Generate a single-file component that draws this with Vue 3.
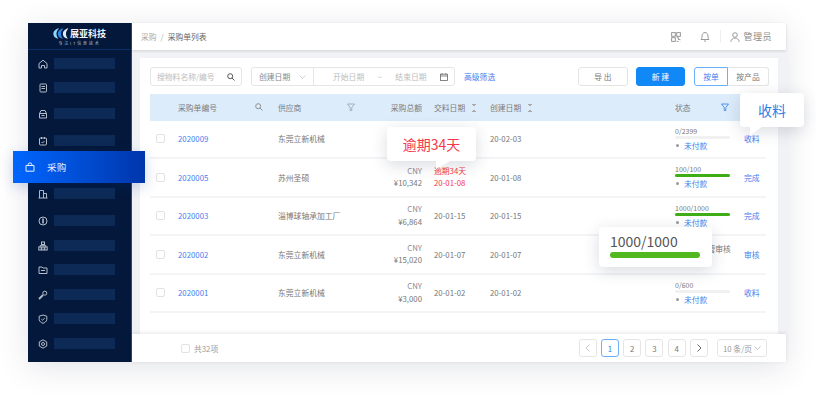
<script setup>
const menu = [
  { key: 'home', gap: 8 }, { key: 'order', gap: 13 }, { key: 'box', gap: 15 }, { key: 'check', gap: 16 },
  { key: 'buy', gap: 5, label: '采购', active: true },
  { key: 'build', gap: 5 }, { key: 'coin', gap: 16 }, { key: 'org', gap: 14 }, { key: 'folder', gap: 13 },
  { key: 'tool', gap: 14 }, { key: 'shield', gap: 13 }, { key: 'gear', gap: 14 },
]

// the first row's total and delivery date sit behind the overdue tooltip in the design
const rows = [
  { code: '2020009', vendor: '东莞立新机械', created: '20-02-03', done: '0/2399', pct: 0, pay: '未付款', action: '收料' },
  { code: '2020005', vendor: '苏州圣硕', total: '¥10,342', late: '逾期34天', date: '20-01-08', created: '20-01-08', done: '100/100', pct: 100, pay: '未付款', action: '完成' },
  { code: '2020003', vendor: '淄博球轴承加工厂', total: '¥6,864', date: '20-01-15', created: '20-01-15', done: '1000/1000', pct: 100, pay: '未付款', action: '完成' },
  { code: '2020002', vendor: '东莞立新机械', total: '¥15,020', date: '20-01-07', created: '20-01-07', wait: '等待主管审核', pay: '未付款', action: '审核' },
  { code: '2020001', vendor: '东莞立新机械', total: '¥3,000', date: '20-01-02', created: '20-01-02', done: '0/600', pct: 0, pay: '未付款', action: '收料' },
]
</script>

<template>
  <div class="page">
    <div class="window">
      <aside class="side">
        <div class="brand">
          <div class="brand-top">
            <svg width="16" height="11" viewBox="0 0 16 11">
              <path d="M6 0.300C2.500 0.800 0 3.500 0.400 6.500C0.700 9 3 10.500 5.500 10.700C3.800 9 3.200 6.500 3.600 4.500C4 3 5 1.500 6 0.300Z" fill="#8fd6f7" />
              <path d="M10.500 0.300C7 0.800 4.500 3.500 4.900 6.500C5.200 9 7.500 10.500 10 10.700C8.300 9 7.700 6.500 8.100 4.500C8.500 3 9.500 1.500 10.500 0.300Z" fill="#2b86e6" />
              <path d="M15.500 0.300C12 0.800 9.500 3.500 9.900 6.500C10.200 9 12.500 10.500 15 10.700C13.300 9 12.700 6.500 13.100 4.500C13.500 3 14.500 1.500 15.500 0.300Z" fill="#d8ecfc" />
            </svg>
            <span>展亚科技</span>
          </div>
          <div class="brand-sub">专注IT信息技术</div>
        </div>
        <nav class="menu">
          <div v-for="m in menu" :key="m.key" class="menu-item" :class="{ active: m.active }" :style="{ marginTop: m.gap + 'px' }">
            <svg class="menu-icon" viewBox="0 0 10 10" fill="none" stroke="currentColor" stroke-width="1">
              <template v-if="m.key === 'home'"><path d="M1 9V4.500L5 1.200L9 4.500V9H6.500V6.500H3.500V9Z" /></template>
              <template v-else-if="m.key === 'order'"><rect x="2" y="1" width="6.500" height="8" rx="0.800" /><path d="M3.500 3.500H7M3.500 5.500H7" /></template>
              <template v-else-if="m.key === 'box'"><path d="M1.500 4.500L3 1.500H7L8.500 4.500V9H1.500Z" /><path d="M1.500 4.500H8.500M3.500 6.500H6.500" /></template>
              <template v-else-if="m.key === 'check'"><rect x="1.500" y="2" width="7" height="7" rx="1" /><path d="M3.500 1V3M6.500 1V3M3.500 6L4.500 7L6.500 5" /></template>
              <template v-else-if="m.key === 'buy'"><path d="M1 3.500H9V9.200H1Z" /><path d="M3.200 3.500V2.200C3.200 0.500 6.800 0.500 6.800 2.200V3.500" /></template>
              <template v-else-if="m.key === 'build'"><path d="M1.500 9V1.500H5.500V9M5.500 4.500H8.500V9M0.500 9H9.500" /></template>
              <template v-else-if="m.key === 'coin'"><circle cx="5" cy="5" r="4" /><path d="M5 2.500V7.500" stroke-width="1.600" /></template>
              <template v-else-if="m.key === 'org'"><rect x="3.500" y="1" width="3" height="2.500" /><rect x="0.800" y="6" width="2.400" height="3" /><rect x="3.800" y="6" width="2.400" height="3" /><rect x="6.800" y="6" width="2.400" height="3" /><path d="M2 6V4.700H8V6" /></template>
              <template v-else-if="m.key === 'folder'"><path d="M1 2H4L5 3H9V8.500H1Z" /><path d="M3 5.500H7" /></template>
              <template v-else-if="m.key === 'tool'"><path d="M1 9L5 5" stroke-width="1.800" /><circle cx="6.800" cy="3.200" r="2" /></template>
              <template v-else-if="m.key === 'shield'"><path d="M5 1L8.800 2.200V5.500C8.800 7.500 6.500 8.800 5 9.300C3.500 8.800 1.200 7.500 1.200 5.500V2.200Z" /><path d="M3.300 5L4.600 6.200L6.800 4" /></template>
              <template v-else><path d="M5 0.800L8.700 2.900V7.100L5 9.200L1.300 7.100V2.900Z" /><circle cx="5" cy="5" r="1.500" /></template>
            </svg>
            <span v-if="m.label" class="menu-label">{{ m.label }}</span>
            <span v-else class="menu-bar"></span>
          </div>
        </nav>
      </aside>

      <section class="main">
        <header class="top">
          <div class="crumb"><span>采购</span><i>/</i><b>采购单列表</b></div>
          <div class="top-right">
            <svg width="10" height="10" viewBox="0 0 11 11" fill="none" stroke="#8e8e8e" stroke-width="1">
              <rect x="0.700" y="0.700" width="4" height="4" /><rect x="6.300" y="0.700" width="4" height="4" />
              <rect x="0.700" y="6.300" width="4" height="4" /><path d="M6.300 6.300H8.300V8.300H10.300M6.300 10.300H8.300M10.300 10.300V10" />
            </svg>
            <svg class="bell" width="10" height="11" viewBox="0 0 10 11" fill="none" stroke="#8e8e8e" stroke-width="0.900">
              <path d="M1 8.500C2 7.500 2 6.500 2 5C2 3 3.300 1.500 5 1.500C6.700 1.500 8 3 8 5C8 6.500 8 7.500 9 8.500Z" /><path d="M4 10H6" />
            </svg>
            <span class="sep"></span>
            <svg width="10" height="10" viewBox="0 0 10 10" fill="none" stroke="#8e8e8e" stroke-width="0.900">
              <circle cx="5" cy="3" r="2.300" /><path d="M0.800 9.800C1.200 7.300 3 6 5 6C7 6 8.800 7.300 9.200 9.800" />
            </svg>
            <span class="user">管理员</span>
          </div>
        </header>

        <div class="content">
          <div class="card">
            <div class="toolbar">
              <div class="field search">
                <span class="ph">搜物料名称/编号</span>
                <svg width="8" height="8" viewBox="0 0 8 8" fill="none" stroke="#555" stroke-width="1"><circle cx="3.200" cy="3.200" r="2.500" /><path d="M5 5L7.500 7.500" /></svg>
              </div>
              <div class="field range">
                <div class="range-type">
                  <span>创建日期</span>
                  <svg width="7" height="4" viewBox="0 0 7 4" fill="none" stroke="#bbb" stroke-width="0.700"><path d="M0.500 0.500L3.500 3.500L6.500 0.500" /></svg>
                </div>
                <div class="range-dates">
                  <span class="ph">开始日期</span><span class="ph">~</span><span class="ph">结束日期</span>
                  <svg width="8" height="8" viewBox="0 0 8 8" fill="none" stroke="#666" stroke-width="0.800"><rect x="0.500" y="1.200" width="7" height="6.300" /><path d="M0.500 3H7.500M2.200 0V1.500M5.800 0V1.500" /></svg>
                </div>
              </div>
              <a class="adv">高级筛选</a>
              <div class="tool-actions">
                <button class="btn">导 出</button>
                <button class="btn primary">新 建</button>
                <div class="seg">
                  <span class="seg-item on">按单</span>
                  <span class="seg-item">按产品</span>
                </div>
              </div>
            </div>

            <div class="table">
              <div class="row head">
                <span></span>
                <span class="with-icon code-head">采购单编号
                  <svg width="8" height="8" viewBox="0 0 8 8" fill="none" stroke="#888" stroke-width="0.900"><circle cx="3.200" cy="3.200" r="2.500" /><path d="M5 5L7.500 7.500" /></svg>
                </span>
                <span class="with-icon vendor-head">供应商
                  <svg width="8" height="8" viewBox="0 0 8 8" fill="none" stroke="#8a9aa8" stroke-width="0.700"><path d="M0.500 1H7.500L4.800 4.500V7.500H3.200V4.500Z" /></svg>
                </span>
                <span class="right">采购总额</span>
                <span class="sorted">交料日期<i class="sort"></i></span>
                <span class="sorted">创建日期<i class="sort"></i></span>
                <span class="with-icon status-head">状态
                  <svg width="8" height="8" viewBox="0 0 8 8" fill="none" stroke="#2f7fe8" stroke-width="0.800"><path d="M0.500 1H7.500L4.800 4.500V7.500H3.200V4.500Z" /></svg>
                </span>
                <span></span>
              </div>

              <div v-for="r in rows" :key="r.code" class="row">
                <span class="check"></span>
                <a class="link">{{ r.code }}</a>
                <span>{{ r.vendor }}</span>
                <span class="right money"><template v-if="r.total"><em>CNY</em><br />{{ r.total }}</template></span>
                <span v-if="r.late" class="late">{{ r.late }}<br />{{ r.date }}</span>
                <span v-else>{{ r.date }}</span>
                <span>{{ r.created }}</span>
                <div class="status">
                  <template v-if="r.wait">
                    <div class="pay nowrap"><i class="dot"></i>{{ r.wait }}</div>
                    <div class="pay"><i class="dot"></i><a class="link">{{ r.pay }}</a></div>
                  </template>
                  <template v-else>
                    <div class="done">{{ r.done }}</div>
                    <div class="track"><div class="fill" :style="{ width: r.pct + '%' }"></div></div>
                    <div class="pay"><i class="dot"></i><a class="link">{{ r.pay }}</a></div>
                  </template>
                </div>
                <a class="link">{{ r.action }}</a>
              </div>
            </div>
          </div>
        </div>

        <footer class="foot">
          <span class="check foot-check"></span>
          <span class="count">共32项</span>
          <div class="pager">
            <span class="pg muted">
              <svg width="5" height="8" viewBox="0 0 5 8" fill="none" stroke="#c4c4c4" stroke-width="0.900"><path d="M4.500 0.500L1 4L4.500 7.500" /></svg>
            </span>
            <span class="pg on">1</span>
            <span class="pg">2</span>
            <span class="pg">3</span>
            <span class="pg">4</span>
            <span class="pg">
              <svg width="5" height="8" viewBox="0 0 5 8" fill="none" stroke="#555" stroke-width="0.900"><path d="M0.500 0.500L4 4L0.500 7.500" /></svg>
            </span>
            <span class="pg size">10 条/页
              <svg width="7" height="4" viewBox="0 0 7 4" fill="none" stroke="#aaa" stroke-width="0.700"><path d="M0.500 0.500L3.500 3.500L6.500 0.500" /></svg>
            </span>
          </div>
        </footer>
      </section>
    </div>

    <div class="pop pop-late">逾期34天</div>
    <div class="pop pop-recv">收料</div>
    <div class="pop pop-bar">
      <div class="pop-bar-text">1000/1000</div>
      <div class="pop-bar-fill"></div>
    </div>
  </div>
</template>

<style scoped>
.page {
  position: relative;
  width: 816px;
  height: 400px;
  padding: 23px 30px 38px 28px;
  box-sizing: border-box;
  background: #fff;
  font-family: "Noto Sans CJK SC", "Noto Sans", sans-serif;
  font-size: 7.800px;
  color: #777;
  overflow: hidden;
}

.window {
  display: flex;
  height: 339px;
  box-shadow: 0 6px 30px rgba(40, 50, 80, 0.13);
}

.side {
  width: 104px;
  flex: none;
  background: #03183a;
  border-right: 1px solid #3c4660;
  box-sizing: border-box;
}

.brand {
  height: 27px;
  padding-top: 4px;
  box-sizing: border-box;
  border-bottom: 1px solid #0b2d68;
  text-align: center;
}

.brand-top {
  display: flex;
  align-items: center;
  justify-content: center;
  gap: 1px;
  height: 12px;
  color: #f2f5fa;
  font-size: 9px;
  font-weight: 700;
}

.brand-sub {
  margin-top: 1px;
  color: #b7c0d0;
  font-size: 4px;
  letter-spacing: 1.800px;
  line-height: 6px;
}

.menu-item {
  display: flex;
  align-items: center;
  gap: 6px;
  height: 11px;
  padding-left: 10px;
  color: #b4bdcc;
}

.menu-icon {
  width: 10px;
  height: 10px;
  flex: none;
}

.menu-bar {
  width: 61px;
  height: 11px;
  background: #0d2a56;
}

.menu-item.active {
  position: relative;
  height: 32px;
  margin-left: -15px;
  margin-right: -14px;
  padding-left: 12px;
  gap: 12px;
  color: #e6efff;
  background: linear-gradient(90deg, #0066ff, #0036ab);
  box-shadow: 0 4px 14px rgba(0, 50, 140, 0.2);
}

.menu-label {
  font-size: 9.500px;
  letter-spacing: 0.300px;
}

.main {
  flex: 1;
  min-width: 0;
  display: flex;
  flex-direction: column;
  background: #f0f2f6;
}

.top {
  position: relative;
  height: 27px;
  flex: none;
  display: flex;
  align-items: center;
  justify-content: space-between;
  padding: 0 14px 0 9px;
  background: #fff;
  box-shadow: 0 1px 3px rgba(0, 0, 0, 0.14);
}

.crumb {
  display: flex;
  gap: 4px;
  color: #aaa;
}

.crumb i {
  font-style: normal;
}

.crumb b {
  font-weight: 400;
  color: #666;
}

.top-right {
  display: flex;
  align-items: center;
}

.bell {
  margin-left: 19px;
}

.sep {
  width: 1px;
  height: 13px;
  margin: 0 9px 0 10px;
  background: #eee;
}

.user {
  margin-left: 3px;
  font-size: 9px;
  letter-spacing: 0.500px;
  color: #8a8a8a;
}

.content {
  flex: 1;
  min-height: 0;
  padding: 8px 8px 0;
}

.card {
  height: 100%;
  padding: 9px 9px 0 10px;
  box-sizing: border-box;
  background: #fff;
}

.toolbar {
  display: flex;
  align-items: center;
  height: 19px;
}

.field {
  display: flex;
  align-items: center;
  height: 100%;
  box-sizing: border-box;
  border: 1px solid #e6e6e6;
  border-radius: 3px;
}

.ph {
  color: #bdbdbd;
}

.search {
  width: 92px;
  justify-content: space-between;
  padding: 0 6px;
}

.range {
  width: 204px;
  margin-left: 9px;
}

.range-type {
  width: 62px;
  height: 100%;
  display: flex;
  align-items: center;
  justify-content: space-between;
  padding: 0 7px;
  box-sizing: border-box;
  border-right: 1px solid #e6e6e6;
  color: #888;
}

.range-dates {
  flex: 1;
  display: flex;
  align-items: center;
  justify-content: space-between;
  padding: 0 6px 0 19px;
}

.adv {
  margin-left: 9px;
  color: #3f7ff0;
}

.tool-actions {
  margin-left: auto;
  display: flex;
  align-items: center;
  height: 100%;
}

.btn {
  width: 50px;
  height: 100%;
  padding: 0;
  border: 1px solid #e4e4e4;
  border-radius: 3px;
  background: #fff;
  font: inherit;
  color: #777;
}

.btn.primary {
  width: 49px;
  margin: 0 9px 0 8px;
  border-color: #1088f5;
  background: #1088f5;
  color: #fff;
}

.seg {
  display: flex;
  height: 100%;
}

.seg-item {
  display: flex;
  align-items: center;
  justify-content: center;
  width: 41px;
  box-sizing: border-box;
  border: 1px solid #e4e4e4;
  border-left: 0;
  border-radius: 0 3px 3px 0;
}

.seg-item.on {
  width: 34px;
  border: 1px solid #6db0f8;
  border-radius: 3px 0 0 3px;
  color: #3f7ff0;
}

.table {
  margin: 8px 3px 0 0;
}

.row {
  display: grid;
  grid-template-columns: 28px 100px 100px 44px 68px 185px 69px 22px;
  align-items: center;
  height: 38.500px;
  border-bottom: 2px solid #f3f4f6;
  box-sizing: border-box;
}

.row > :nth-child(5) {
  margin-left: 12px;
}

.row.head {
  height: 26.500px;
  border: 0;
  background: #dcecfb;
  color: #7c7c7c;
}

.with-icon {
  display: flex;
  align-items: center;
  justify-content: space-between;
}

.code-head {
  padding-right: 15px;
}

.vendor-head {
  padding-right: 23px;
}

.status-head {
  padding-right: 15px;
}

.sorted {
  white-space: nowrap;
}

.sort {
  display: inline-block;
  width: 4px;
  height: 8px;
  margin-left: 7px;
  vertical-align: -1px;
  background:
    linear-gradient(45deg, transparent 50%, #aaa 50%) 0 0 / 2px 3px no-repeat,
    linear-gradient(-45deg, transparent 50%, #aaa 50%) 2px 0 / 2px 3px no-repeat,
    linear-gradient(135deg, transparent 50%, #aaa 50%) 0 5px / 2px 3px no-repeat,
    linear-gradient(-135deg, transparent 50%, #aaa 50%) 2px 5px / 2px 3px no-repeat;
}

.right {
  text-align: right;
  white-space: nowrap;
}

.money {
  line-height: 12.500px;
}

.money em {
  font-style: normal;
  color: #8b8b98;
}

.check {
  display: block;
  width: 9px;
  height: 9px;
  margin-left: 6px;
  border: 1px solid #e2e2e2;
  border-radius: 2px;
  box-sizing: border-box;
}

.link {
  color: #3f7ff0;
}

.late {
  color: #f5384a;
  line-height: 12.500px;
  white-space: nowrap;
}

.done {
  font-size: 7px;
  line-height: 8px;
  color: #777;
}

.track {
  height: 3px;
  width: 55px;
  margin: 1px 0;
  border-radius: 2px;
  background: #f1f1f1;
}

.fill {
  height: 100%;
  border-radius: 2px;
  background: #3fae14;
}

.pay {
  display: flex;
  align-items: center;
  line-height: 11px;
}

.nowrap {
  white-space: nowrap;
}

.dot {
  width: 3px;
  height: 3px;
  margin: 0 5px 0 1px;
  border-radius: 50%;
  background: #9a9a9a;
}

.foot {
  position: relative;
  height: 28px;
  flex: none;
  display: flex;
  align-items: center;
  padding: 0 19px 0 49px;
  background: #fff;
  box-shadow: 0 -1px 4px rgba(0, 0, 0, 0.1);
}

.foot-check {
  margin: 0;
}

.count {
  margin-left: 4px;
  color: #9a9a9a;
}

.pager {
  margin-left: auto;
  display: flex;
  align-items: center;
  gap: 4.300px;
}

.pg {
  display: flex;
  align-items: center;
  justify-content: center;
  width: 18px;
  height: 18px;
  box-sizing: border-box;
  border: 1px solid #e6e6e6;
  border-radius: 3px;
  color: #777;
}

.pg.on {
  border-color: #6db0f8;
  color: #2f7fe8;
}

.pg.size {
  width: 50px;
  margin-left: 4.700px;
  gap: 2px;
  color: #999;
}

.pop {
  position: absolute;
  background: #fff;
  border-radius: 4px;
  box-shadow: 0 4px 16px rgba(30, 40, 70, 0.17);
}

.pop-late,
.pop-recv {
  display: flex;
  align-items: center;
  justify-content: center;
  font-size: 14px;
}

.pop-late {
  left: 387px;
  top: 127px;
  width: 89px;
  height: 34px;
  color: #f5384a;
}

.pop-late::after,
.pop-recv::after {
  content: '';
  position: absolute;
  top: 100%;
  border-style: solid;
}

.pop-late::after {
  left: 49px;
  border-width: 8px 0 0 14px;
  border-color: #fff transparent transparent transparent;
  transform: scaleX(-1);
}

.pop-recv {
  left: 740px;
  top: 93px;
  width: 64px;
  height: 34px;
  color: #2f7fe8;
}

.pop-recv::after {
  left: 10px;
  border-width: 8px 12px 0 0;
  border-color: #fff transparent transparent transparent;
}

.pop-bar {
  left: 599px;
  top: 227px;
  width: 113px;
  height: 40px;
  padding: 4px 11px 0;
  box-sizing: border-box;
}

.pop-bar-text {
  font-size: 14px;
  line-height: 20px;
  color: #555;
}

.pop-bar-fill {
  width: 90px;
  height: 6px;
  margin-top: 1px;
  border-radius: 3px;
  background: #52b81f;
}
</style>

<style>
html, body { margin: 0; background: #fff; }
</style>
